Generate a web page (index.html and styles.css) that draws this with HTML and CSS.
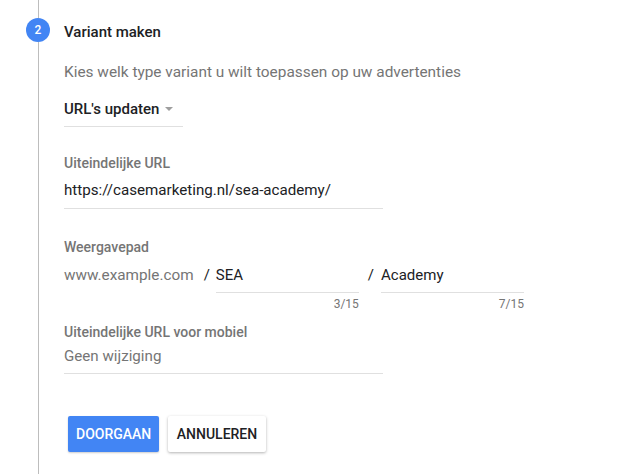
FILE: index.html
```html
<!DOCTYPE html>
<html lang="nl">
<head>
<meta charset="utf-8">
<title>Variant maken</title>
<link rel="stylesheet" href="styles.css">
</head>
<body>
<div class="step">
  <div class="rail">
    <div class="rail-line rail-top"></div>
    <div class="badge">2</div>
    <div class="rail-line rail-bottom"></div>
  </div>
  <div class="content">
    <div class="title">Variant maken</div>
    <div class="subtitle">Kies welk type variant u wilt toepassen op uw advertenties</div>
    <div class="select"><span>URL's updaten</span><span class="caret"></span></div>

    <div class="label label-first">Uiteindelijke URL</div>
    <div class="field field-wide">https://casemarketing.nl/sea-academy/</div>

    <div class="label label-path">Weergavepad</div>
    <div class="path">
      <span class="prefix">www.example.com</span>
      <span class="slash">/</span>
      <div class="path-field">
        <div class="field">SEA</div>
        <div class="counter">3/15</div>
      </div>
      <span class="slash slash-2">/</span>
      <div class="path-field">
        <div class="field">Academy</div>
        <div class="counter">7/15</div>
      </div>
    </div>

    <div class="label label-mobile">Uiteindelijke URL voor mobiel</div>
    <div class="field field-wide field-muted">Geen wijziging</div>

    <div class="actions">
      <button class="btn btn-primary">Doorgaan</button>
      <button class="btn btn-secondary">Annuleren</button>
    </div>
  </div>
</div>
</body>
</html>
```
FILE: styles.css
```css
html, body {
  margin: 0;
  padding: 0;
  background: #ffffff;
}
body {
  font-family: Roboto, "Liberation Sans", Arial, sans-serif;
  color: #202124;
  width: 641px;
  height: 474px;
  overflow: hidden;
}
.step {
  display: flex;
  height: 474px;
}
.rail {
  display: flex;
  flex-direction: column;
  align-items: center;
  width: 24px;
  margin-left: 26px;
  margin-right: 14px;
}
.rail-line {
  width: 1px;
  background: #bdbdbd;
}
.rail-top {
  height: 18px;
}
.rail-bottom {
  flex: 1;
}
.badge {
  width: 24px;
  height: 24px;
  border-radius: 50%;
  background: #4285f4;
  color: #ffffff;
  font-size: 12px;
  line-height: 24px;
  text-align: center;
  font-weight: 500;
}
.content {
  display: flex;
  flex-direction: column;
  align-items: flex-start;
}
.title {
  margin-top: 20px;
  font-size: 15px;
  line-height: 24px;
  font-weight: 500;
  color: #202124;
}
.subtitle {
  margin-top: 16px;
  font-size: 15.4px;
  line-height: 24px;
  color: #757575;
}
.select {
  margin-top: 13px;
  width: 119px;
  display: flex;
  align-items: center;
  font-size: 15px;
  line-height: 24px;
  font-weight: 500;
  color: #202124;
  padding-bottom: 5px;
  border-bottom: 1px solid #e0e0e0;
}
.caret {
  margin-left: 6px;
  width: 0;
  height: 0;
  border-left: 4px solid transparent;
  border-right: 4px solid transparent;
  border-top: 4px solid #9e9e9e;
}
.label {
  font-size: 14px;
  line-height: 20px;
  font-weight: 500;
  color: #757575;
}
.label-first {
  margin-top: 26px;
}
.label-path {
  margin-top: 28px;
}
.label-mobile {
  margin-top: 10px;
}
.field {
  font-size: 15px;
  line-height: 24px;
  color: #202124;
  padding-bottom: 5px;
  border-bottom: 1px solid #e0e0e0;
}
.field-wide {
  width: 319px;
  margin-top: 5px;
  padding-bottom: 6px;
  font-size: 15.15px;
}
.field-muted {
  margin-top: 2px;
  padding-bottom: 5px;
  color: #757575;
}
.path {
  display: flex;
  align-items: flex-start;
  margin-top: 6px;
  font-size: 15px;
  line-height: 24px;
}
.prefix {
  color: #757575;
  font-size: 15.3px;
}
.slash {
  color: #202124;
  margin-left: 10px;
  margin-right: 6px;
}
.slash-2 {
  margin-left: 9px;
  margin-right: 7px;
}
.path-field {
  width: 143px;
  display: flex;
  flex-direction: column;
}
.counter {
  margin-top: 3px;
  font-size: 12px;
  line-height: 16px;
  color: #757575;
  text-align: right;
}
.actions {
  display: flex;
  gap: 9px;
  margin-top: 42px;
  margin-left: 4px;
}
.btn {
  height: 36px;
  border: none;
  border-radius: 2px;
  font-family: Roboto, "Liberation Sans", Arial, sans-serif;
  font-size: 14px;
  font-weight: 500;
  text-transform: uppercase;
  padding: 0 8px;
  cursor: pointer;
}
.btn-primary {
  width: 91px;
  background: #4285f4;
  color: #ffffff;
  box-shadow: 0 1px 2px rgba(0,0,0,0.2);
}
.btn-secondary {
  width: 98px;
  background: #ffffff;
  color: #202124;
  box-shadow: 0 1px 3px rgba(0,0,0,0.3);
}
```
